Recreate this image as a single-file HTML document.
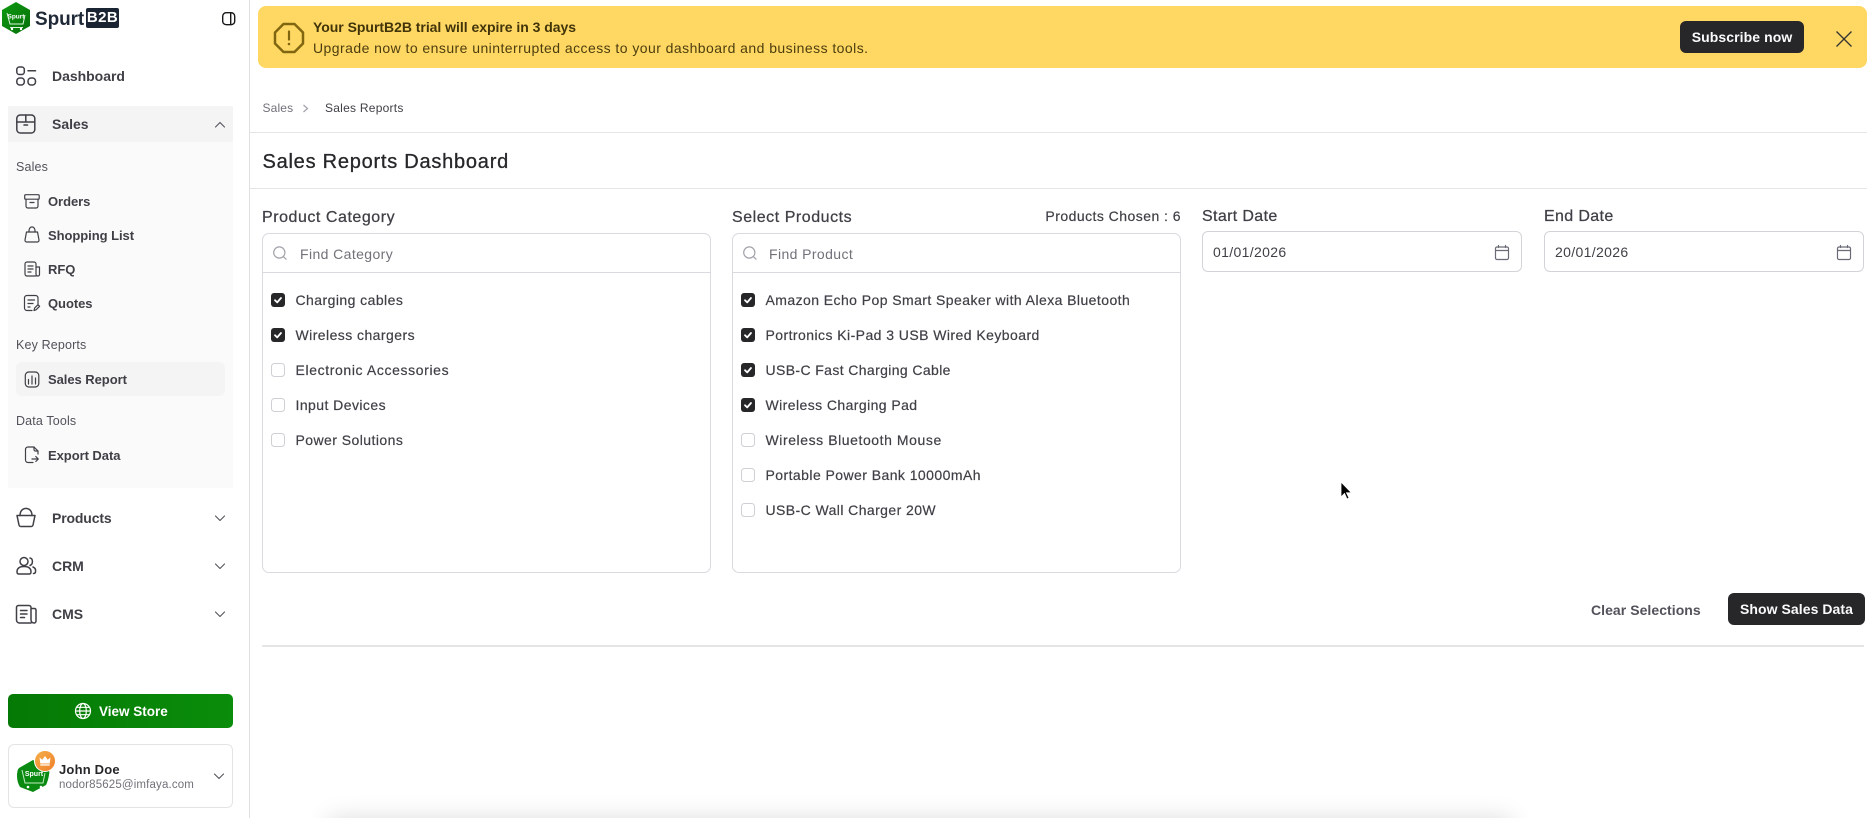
<!DOCTYPE html>
<html>
<head>
<meta charset="utf-8">
<title>Sales Reports Dashboard</title>
<style>
html,body{margin:0;padding:0;width:1867px;height:818px;overflow:hidden;background:#fff;}
body{position:relative;font-family:"Liberation Sans",sans-serif;color:#3f3f46;}
.b{position:absolute;box-sizing:border-box;}
.t{position:absolute;white-space:nowrap;line-height:20px;height:20px;font-size:14px;}
.nav{font-weight:700;color:#3f3f46;letter-spacing:-.02px;left:52px;font-size:14px;}
.sub{font-weight:700;color:#3f3f46;left:48px;font-size:13px;letter-spacing:-.05px;}
.lab{left:16px;font-size:12.5px;color:#52525b;letter-spacing:.15px;}
.li{font-size:14px;color:#3f3f46;letter-spacing:.44px;-webkit-text-stroke:.2px #3f3f46;}
.h{font-size:16px;color:#3f3f46;letter-spacing:.54px;-webkit-text-stroke:.25px #3f3f46;}
.ph{font-size:14px;color:#71717a;letter-spacing:.4px;}
.ic{fill:none;stroke:#3f3f46;stroke-width:1.5;stroke-linecap:round;stroke-linejoin:round;}
.ics{fill:none;stroke:#3f3f46;stroke-width:1.2;stroke-linecap:round;stroke-linejoin:round;}
</style>
</head>
<body>
<!-- bottom shadow -->
<div class="b" style="left:335px;top:826px;width:1170px;height:20px;box-shadow:0 0 26px 6px rgba(0,0,0,.16);"></div>

<!-- sidebar -->
<div class="b" style="left:249px;top:0;width:1px;height:818px;background:#e0e0e0;"></div>
<div class="b" style="left:8px;top:106px;width:225px;height:36px;background:#f4f4f5;"></div>
<div class="b" style="left:8px;top:142px;width:225px;height:346px;background:#fafafa;"></div>
<div class="b" style="left:16px;top:362px;width:209px;height:34px;background:#f4f4f5;border-radius:6px;"></div>
<div class="b" style="left:8px;top:694px;width:225px;height:34px;border-radius:5px;background:linear-gradient(90deg,#057905,#0a8d0a);"></div>
<div class="b" style="left:8px;top:744px;width:225px;height:64px;border:1px solid #e4e4e7;border-radius:6px;"></div>

<!-- logo text -->
<div class="t" style="left:35px;top:10px;font-size:19px;font-weight:700;color:#1f2937;letter-spacing:-.1px;">Spurt</div>
<div class="b" style="left:86px;top:8px;width:33px;height:20px;background:#1b2433;border-radius:2px;"></div>
<div class="t" style="left:86px;top:8px;width:33px;text-align:center;font-size:15px;font-weight:700;color:#fff;letter-spacing:.4px;">B2B</div>

<div class="t nav" style="top:66px;">Dashboard</div>
<div class="t nav" style="top:114px;">Sales</div>
<div class="t lab" style="top:157px;">Sales</div>
<div class="t sub" style="top:191.500px;">Orders</div>
<div class="t sub" style="top:226px;">Shopping List</div>
<div class="t sub" style="top:259.500px;">RFQ</div>
<div class="t sub" style="top:293.500px;">Quotes</div>
<div class="t lab" style="top:335px;">Key Reports</div>
<div class="t sub" style="top:369.500px;">Sales Report</div>
<div class="t lab" style="top:411px;">Data Tools</div>
<div class="t sub" style="top:445.500px;">Export Data</div>
<div class="t nav" style="top:508px;letter-spacing:-.15px;">Products</div>
<div class="t nav" style="top:556px;">CRM</div>
<div class="t nav" style="top:604px;">CMS</div>
<div class="t" style="left:99px;top:701.500px;font-weight:700;color:#fff;letter-spacing:0;font-size:13.500px;">View Store</div>
<div class="t" style="left:59px;top:760px;font-weight:700;color:#27272a;letter-spacing:.2px;font-size:13px;">John Doe</div>
<div class="t" style="left:59px;top:775px;font-size:11.500px;color:#71717a;letter-spacing:.15px;">nodor85625@imfaya.com</div>

<!-- banner -->
<div class="b" style="left:258px;top:6px;width:1609px;height:62px;background:#ffd863;border-radius:8px;"></div>
<div class="t" style="left:313px;top:17px;font-weight:700;font-size:14px;color:#42340a;letter-spacing:-.03px;">Your SpurtB2B trial will expire in 3 days</div>
<div class="t" style="left:313px;top:38px;font-size:14px;color:#4c3d0e;letter-spacing:.445px;">Upgrade now to ensure uninterrupted access to your dashboard and business tools.</div>
<div class="b" style="left:1680px;top:21px;width:124px;height:32px;background:#27272a;border-radius:6px;"></div>
<div class="t" style="left:1680px;top:27px;width:124px;text-align:center;font-weight:700;color:#fafafa;font-size:14px;letter-spacing:.08px;">Subscribe now</div>

<!-- header -->
<div class="t" style="left:262.500px;top:98px;font-size:12px;color:#71717a;letter-spacing:.15px;">Sales</div>
<div class="t" style="left:325px;top:98px;font-size:12px;color:#3f3f46;letter-spacing:.25px;">Sales Reports</div>
<div class="b" style="left:250px;top:132px;width:1617px;height:1px;background:#e5e5e5;"></div>
<div class="t" style="left:262.500px;top:151.500px;font-size:20px;color:#27272a;letter-spacing:.76px;-webkit-text-stroke:.3px #27272a;">Sales Reports Dashboard</div>
<div class="b" style="left:250px;top:188px;width:1617px;height:1px;background:#e5e5e5;"></div>

<!-- Category -->
<div class="t h" style="left:262px;top:208px;">Product Category</div>
<div class="b" style="left:262px;top:233px;width:449px;height:340px;border:1px solid #d9d9e0;border-radius:7px;"></div>
<div class="b" style="left:263px;top:272px;width:447px;height:1px;background:#d9d9e0;"></div>
<div class="t ph" style="left:300px;top:244px;">Find Category</div>
<div class="t li" style="left:295.500px;top:290px;">Charging cables</div>
<div class="t li" style="left:295.500px;top:325px;">Wireless chargers</div>
<div class="t li" style="left:295.500px;top:360px;letter-spacing:.62px;">Electronic Accessories</div>
<div class="t li" style="left:295.500px;top:395px;">Input Devices</div>
<div class="t li" style="left:295.500px;top:430px;">Power Solutions</div>

<!-- Products -->
<div class="t h" style="left:732px;top:208px;">Select Products</div>
<div class="t" style="right:686px;top:206px;font-size:14px;color:#3f3f46;letter-spacing:.46px;-webkit-text-stroke:.2px #3f3f46;">Products Chosen : 6</div>
<div class="b" style="left:732px;top:233px;width:449px;height:340px;border:1px solid #d9d9e0;border-radius:7px;"></div>
<div class="b" style="left:733px;top:272px;width:447px;height:1px;background:#d9d9e0;"></div>
<div class="t ph" style="left:769px;top:244px;">Find Product</div>
<div class="t li" style="left:765.500px;top:290px;letter-spacing:.43px;">Amazon Echo Pop Smart Speaker with Alexa Bluetooth</div>
<div class="t li" style="left:765.500px;top:325px;">Portronics Ki-Pad 3 USB Wired Keyboard</div>
<div class="t li" style="left:765.500px;top:360px;letter-spacing:.38px;">USB-C Fast Charging Cable</div>
<div class="t li" style="left:765.500px;top:395px;letter-spacing:.42px;">Wireless Charging Pad</div>
<div class="t li" style="left:765.500px;top:430px;letter-spacing:.57px;">Wireless Bluetooth Mouse</div>
<div class="t li" style="left:765.500px;top:465px;">Portable Power Bank 10000mAh</div>
<div class="t li" style="left:765.500px;top:500px;letter-spacing:.42px;">USB-C Wall Charger 20W</div>

<!-- Dates -->
<div class="t h" style="left:1202px;top:207px;letter-spacing:.36px;">Start Date</div>
<div class="t h" style="left:1544px;top:207px;letter-spacing:.36px;">End Date</div>
<div class="b" style="left:1202px;top:231px;width:320px;height:41px;border:1px solid #d4d4d8;border-radius:6px;"></div>
<div class="b" style="left:1544px;top:231px;width:320px;height:41px;border:1px solid #d4d4d8;border-radius:6px;"></div>
<div class="t" style="left:1213px;top:242px;font-size:14px;color:#3f3f46;letter-spacing:.35px;">01/01/2026</div>
<div class="t" style="left:1555px;top:242px;font-size:14px;color:#3f3f46;letter-spacing:.35px;">20/01/2026</div>

<!-- Actions -->
<div class="t" style="left:1591px;top:600px;font-size:14px;font-weight:700;color:#52525b;letter-spacing:.05px;">Clear Selections</div>
<div class="b" style="left:1728px;top:593px;width:137px;height:32px;background:#27272a;border-radius:6px;"></div>
<div class="t" style="left:1728px;top:599px;width:137px;text-align:center;font-size:14px;font-weight:700;color:#fafafa;letter-spacing:.06px;">Show Sales Data</div>
<div class="b" style="left:262px;top:645px;width:1602px;height:2px;background:#e5e5e5;"></div>

<!-- all icons -->
<svg width="1867" height="818" viewBox="0 0 1867 818" style="position:absolute;left:0;top:0;">
  <defs>
    <linearGradient id="g1" x1="0" y1="0" x2="1" y2="1"><stop offset="0" stop-color="#0f9a12"/><stop offset="1" stop-color="#056f08"/></linearGradient>
    <linearGradient id="g2" x1="0" y1="0" x2="1" y2="1"><stop offset="0" stop-color="#f5b04a"/><stop offset="1" stop-color="#ee7e2a"/></linearGradient>
  </defs>
  <!-- logo hex -->
  <polygon points="16,2 30,10 30,26 16,34 2,26 2,10" fill="url(#g1)"/>
  <path d="M7 13 L10 24 H23 L25 15 M10 27.500 h13" fill="none" stroke="#d9f5d9" stroke-width="1"/>
  <circle cx="12" cy="29" r="1.200" fill="#fff"/><circle cx="21" cy="29" r="1.200" fill="#fff"/>
  <text x="16" y="18.500" font-size="6.500" font-weight="700" fill="#fff" text-anchor="middle" font-family="Liberation Sans">Spurt</text>
  <!-- toggle -->
  <rect x="222.700" y="12.700" width="12" height="12" rx="3.500" fill="none" stroke="#18181b" stroke-width="1.400"/>
  <path d="M230.700 13v11.500" stroke="#18181b" stroke-width="1.400"/>

  <!-- dashboard -->
  <g class="ic">
    <rect x="16.800" y="67" width="7.500" height="7.500" rx="2.500"/>
    <path d="M28 70.700h7.500"/>
    <rect x="16.800" y="78" width="7.500" height="7" rx="3"/>
    <rect x="28" y="78" width="7.500" height="7" rx="3"/>
    <!-- sales -->
    <rect x="16.800" y="115" width="18" height="18" rx="3.500"/>
    <path d="M16.800 122h18M25.800 115v7M24 125h3.500"/>
    <!-- products -->
    <path d="M17 515.500h18l-2 9.500a2 2 0 0 1-2 1.500H21a2 2 0 0 1-2-1.500z"/>
    <path d="M20 515.500c0-9.500 12-9.500 12 0"/>
    <!-- crm -->
    <circle cx="24" cy="561.500" r="4"/>
    <path d="M17 572c0-4 3-5.500 7-5.500s7 1.500 7 5.500c0 1.500-1 2-2 2H19c-1 0-2-.5-2-2z"/>
    <path d="M30 558c3 .5 3.500 6 0 7.500M33 567c2 .8 3 2.500 2.500 5-.2 1-1 1.500-2 1.500"/>
    <!-- cms -->
    <path d="M31 623H19.500a3 3 0 0 1-3-3V607.500a2 2 0 0 1 2-2H29a2 2 0 0 1 2 2V620a3 3 0 0 0 3 3 2 2 0 0 0 2-2V610a1.500 1.500 0 0 0-1.500-1.500H31"/>
    <path d="M20.500 610.500h6.500M20.500 614h6.500M20.500 617.500h4"/>
  </g>
  <!-- chevrons -->
  <path d="M215.500 127L220 122.500l4.500 4.500M215.500 516l4.500 4.500 4.500-4.500M215.500 564l4.500 4.500 4.500-4.500M215.500 612l4.500 4.500 4.500-4.500M214.500 774l4.500 4.500 4.500-4.500" fill="none" stroke="#52525b" stroke-width="1.100" stroke-linecap="round" stroke-linejoin="round"/>
  <g class="ics">
    <!-- orders -->
    <rect x="24.700" y="194.700" width="14.500" height="4.500" rx="1"/>
    <path d="M26 199.500V206a2 2 0 0 0 2 2h8a2 2 0 0 0 2-2v-6.500M30 202.500h4"/>
    <!-- shopping -->
    <path d="M26.500 232h11l1.500 8a1.700 1.700 0 0 1-1.700 2H26.700a1.700 1.700 0 0 1-1.700-2z"/>
    <path d="M29 232v-1c0-5.500 6-5.500 6 0v1"/>
    <!-- rfq -->
    <path d="M36 276H27a2 2 0 0 1-2-2V264a2 2 0 0 1 2-2h7a2 2 0 0 1 2 2v10a2 2 0 0 0 2 2 1.500 1.500 0 0 0 1.500-1.500V267H36"/>
    <path d="M28 266h5M28 269h5M28 272h3"/>
    <!-- quotes -->
    <path d="M32 310.500H27a2.500 2.500 0 0 1-2.500-2.500V298a2.500 2.500 0 0 1 2.500-2.500h8.500A2.500 2.500 0 0 1 38 298v6"/>
    <path d="M28 300h6.500M28 303.500h5M28 307h2"/>
    <path d="M34 310.500l.6-2.400 3.400-3.400 1.600 1.600-3.400 3.400z"/>
    <!-- sales report -->
    <rect x="25.300" y="372" width="13.500" height="15" rx="3.500"/>
    <path d="M28.500 379.500v4.500M32 376v8M35.500 378v6"/>
    <!-- export -->
    <path d="M33 462.500H28a2.500 2.500 0 0 1-2.500-2.500V449.500a2.500 2.500 0 0 1 2.500-2.500h6l4 4v3"/>
    <path d="M34 447v2.500a1.500 1.500 0 0 0 1.500 1.500H38"/>
    <path d="M32 459h6M35.800 456.500L38.300 459l-2.500 2.500"/>
  </g>
  <!-- search -->
  <g fill="none" stroke="#a1a1aa" stroke-width="1.200" stroke-linecap="round">
    <circle cx="279.300" cy="252.500" r="5.600"/><path d="M283.500 256.700l2.500 2.500"/>
    <circle cx="749.300" cy="252.500" r="5.600"/><path d="M753.500 256.700l2.500 2.500"/>
  </g>
  <!-- checkboxes -->
  <g fill="#27272a">
    <rect x="271" y="293" width="14" height="14" rx="3"/><rect x="271" y="328" width="14" height="14" rx="3"/>
    <rect x="741" y="293" width="14" height="14" rx="3"/><rect x="741" y="328" width="14" height="14" rx="3"/>
    <rect x="741" y="363" width="14" height="14" rx="3"/><rect x="741" y="398" width="14" height="14" rx="3"/>
  </g>
  <g fill="none" stroke="#fff" stroke-width="1.800" stroke-linecap="round" stroke-linejoin="round">
    <path d="M275 300.200l2.200 2.200 3.800-4.400"/><path d="M275 335.200l2.200 2.200 3.800-4.400"/>
    <path d="M745 300.200l2.200 2.200 3.800-4.400"/><path d="M745 335.200l2.200 2.200 3.800-4.400"/>
    <path d="M745 370.200l2.200 2.200 3.800-4.400"/><path d="M745 405.200l2.200 2.200 3.800-4.400"/>
  </g>
  <g fill="#fff" stroke="#cfcfd4" stroke-width="1">
    <rect x="271.500" y="363.500" width="13" height="13" rx="3"/><rect x="271.500" y="398.500" width="13" height="13" rx="3"/><rect x="271.500" y="433.500" width="13" height="13" rx="3"/>
    <rect x="741.500" y="433.500" width="13" height="13" rx="3"/><rect x="741.500" y="468.500" width="13" height="13" rx="3"/><rect x="741.500" y="503.500" width="13" height="13" rx="3"/>
  </g>
  <!-- calendars -->
  <g fill="none" stroke="#6b6b76" stroke-width="1.200" stroke-linecap="round">
    <rect x="1495.500" y="247" width="13" height="12.500" rx="1.500"/><path d="M1495.500 250.500h13M1498.500 245.500v2M1505.500 245.500v2"/>
    <rect x="1837.500" y="247" width="13" height="12.500" rx="1.500"/><path d="M1837.500 250.500h13M1840.500 245.500v2M1847.500 245.500v2"/>
  </g>
  <!-- breadcrumb chevron -->
  <path d="M303.500 105l4 3.500-4 3.500" fill="none" stroke="#a1a1aa" stroke-width="1.200"/>
  <!-- banner -->
  <polygon points="283.500,24 294.500,24 303,32.500 303,43.500 294.500,52 283.500,52 275,43.500 275,32.500" fill="none" stroke="#806610" stroke-width="2.500" stroke-linejoin="round"/>
  <path d="M289 31.500v8" stroke="#806610" stroke-width="2.200" stroke-linecap="round"/>
  <circle cx="289" cy="44" r="1.300" fill="#806610"/>
  <path d="M1836.500 31.500l15 15M1851.500 31.500l-15 15" stroke="#333" stroke-width="1.300" fill="none"/>
  <!-- globe -->
  <g fill="none" stroke="#fff" stroke-width="1.200">
    <circle cx="83" cy="711" r="7.500"/><ellipse cx="83" cy="711" rx="3.300" ry="7.500"/><path d="M75.500 711h15M76.500 707.300h13M76.500 714.700h13"/>
  </g>
  <!-- avatar -->
  <path d="M33 760 L48 768 Q50 770 49 775 Q48 781 46 785 L33 792 L20 787 Q17 782 17 776 Q17 770 19 768 Z" fill="#0b8a12"/>
  <path d="M22 770 L25 783 H43 L45 773" fill="none" stroke="#bfe9bf" stroke-width="1"/>
  <circle cx="28" cy="787" r="1.300" fill="#fff"/><circle cx="41" cy="787" r="1.300" fill="#fff"/>
  <text x="34" y="776" font-size="7" font-weight="700" fill="#fff" text-anchor="middle" font-family="Liberation Sans">Spurt</text>
  <circle cx="45" cy="761" r="10.500" fill="url(#g2)" stroke="#fff" stroke-width="1"/>
  <path d="M39.500 757.500l2.800 2.200 2.700-3.700 2.700 3.700 2.800-2.200-.8 6h-9.400z" fill="#fff"/>
  <rect x="40.300" y="764.300" width="9.400" height="1.300" fill="#fff"/>
  <!-- cursor -->
  <path d="M1341 482v15l3.500-3.500 2.500 5.500 2-1-2.500-5.200h5z" fill="#000" stroke="#fff" stroke-width=".8"/>
</svg>
</body>
</html>
